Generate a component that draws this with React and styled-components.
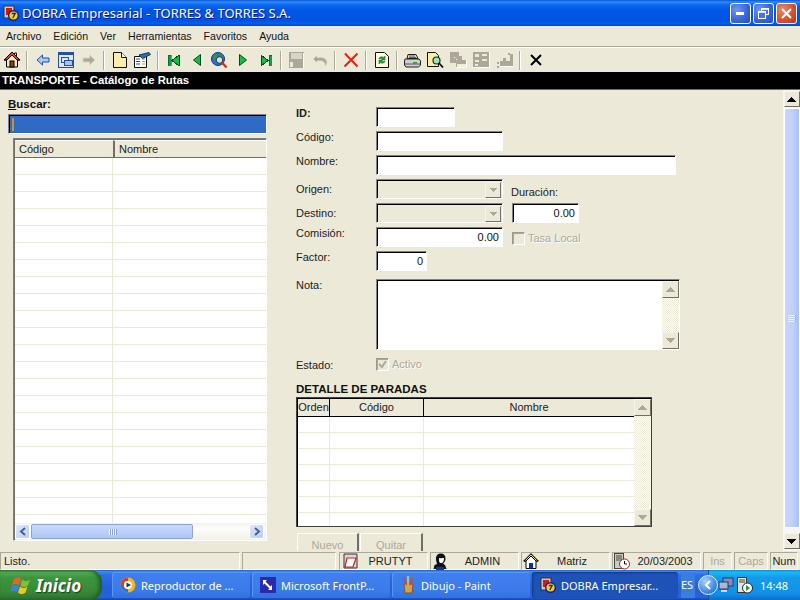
import React from 'react'
import styled, { createGlobalStyle } from 'styled-components'

const UI_FONT = `"Liberation Sans", Arial, sans-serif`

const GlobalStyle = createGlobalStyle`
  html, body { margin: 0; padding: 0; background: #ece9d8; }
  * { box-sizing: border-box; }
`

const Desktop = styled.div`
  width: 800px;
  height: 600px;
  overflow: hidden;
  display: flex;
  flex-direction: column;
  background: #ece9d8;
  font: 11px ${UI_FONT};
  color: #000;
`

/* Title bar */
const TitleBar = styled.div`
  height: 26px;
  flex: none;
  display: flex;
  align-items: center;
  padding: 0 3px 0 3px;
  background: linear-gradient(180deg, #0a56d0 0%, #2f8cff 8%, #0f6cf0 16%, #0056e6 40%, #0054e3 80%, #0060f0 90%, #0047c4 100%);
`
const TitleIcon = styled.span`
  display: flex;
  margin-right: 3px;
`
const TitleText = styled.div`
  flex: 1;
  color: #fff;
  font: 13px "Noto Sans", sans-serif;
  text-shadow: 1px 1px 0 #0f1089;
  white-space: nowrap;
`
const WinButton = styled.div`
  width: 21px;
  height: 21px;
  margin-left: 2px;
  display: flex;
  align-items: center;
  justify-content: center;
  border: 1px solid #fff;
  border-radius: 3px;
  background: ${p => p.$close
    ? 'radial-gradient(circle at 30% 30%, #e98a6c, #d9512f 55%, #b8341a)'
    : 'radial-gradient(circle at 30% 30%, #6f97ee, #3a66db 55%, #2748c0)'};
`

/* Menu */
const MenuBar = styled.div`
  height: 19px;
  flex: none;
  display: flex;
  align-items: center;
  gap: 12px;
  padding: 0 6px;
  margin-bottom: 1px;
  font-size: 10.6px;
`
const MenuItem = styled.span`
  color: #111;
`
const Rule = styled.div`
  height: 2px;
  flex: none;
  background: #fff;
  border-top: 1px solid #aca899;
`

/* Toolbar */
const Toolbar = styled.div`
  height: 24px;
  flex: none;
  display: flex;
  align-items: center;
`
const ToolButton = styled.div`
  width: 23px;
  height: 23px;
  display: flex;
  align-items: center;
  justify-content: center;
`
const ToolSep = styled.div`
  width: 8px;
  height: 19px;
  position: relative;
  &::after {
    content: '';
    position: absolute;
    left: 3px;
    top: 0;
    bottom: 0;
    width: 1px;
    background: #aca899;
    box-shadow: 1px 0 0 #fff;
  }
`
const Banner = styled.div`
  height: 17px;
  flex: none;
  background: #000;
  color: #fff;
  font: bold 11.3px/17px ${UI_FONT};
  padding-left: 2px;
`

/* Body */
const Main = styled.div`
  height: 462px;
  flex: none;
  display: flex;
  overflow: hidden;
  border-top: 1px solid #716f64;
`
const LeftPane = styled.div`
  width: 268px;
  flex: none;
  display: flex;
  flex-direction: column;
  padding: 8px 1px 10px 8px;
`
const SearchLabel = styled.div`
  font: bold 11.5px/13px ${UI_FONT};
  height: 16px;
  color: #111;
  u { text-decoration: underline; }
`
const SearchBox = styled.div`
  height: 20px;
  flex: none;
  background: #316ac5;
  border: 1px solid;
  border-color: #808080 #fff #fff #808080;
  box-shadow: inset 1px 1px 0 #000;
  padding: 3px 0 0 3px;
  &::after {
    content: '';
    display: block;
    width: 2px;
    height: 13px;
    background: #ce9231;
  }
`
const GridFrame = styled.div`
  flex: 1;
  margin: 4px 0 0 5px;
  display: flex;
  flex-direction: column;
  min-height: 0;
  border: 1px solid;
  border-color: #808080 #fff #fff #808080;
  box-shadow: inset 1px 1px 0 #716f64;
  padding: 1px 0 0 1px;
`
const GridHead = styled.div`
  height: 18px;
  flex: none;
  display: grid;
  grid-template-columns: 98px 1fr;
  background: #ece9d8;
  border-bottom: 1px solid #716f64;
`
const GridHeadCell = styled.div`
  line-height: 17px;
  padding-left: 4px;
  color: #222;
  border-top: 1px solid #fff;
  & + & { border-left: 2px solid #716f64; }
`
const GridBody = styled.div`
  flex: 1;
  min-height: 0;
  overflow: hidden;
  background: #fff;
`
const GridRow = styled.div`
  height: 17px;
  display: grid;
  grid-template-columns: 98px 1fr;
  border-bottom: 1px solid #ece9d8;
`
const GridCell = styled.div`
  border-right: 1px solid #ece9d8;
`

const HScroll = styled.div`
  height: 17px;
  flex: none;
  display: flex;
  align-items: center;
  padding: 0 2px 0 0;
  background: linear-gradient(180deg, #f3f1ec, #fdfdfb 30%, #f2f0e6);
`
const LunaArrow = styled.div`
  width: 15px;
  height: 15px;
  flex: none;
  display: flex;
  align-items: center;
  justify-content: center;
  border: 1px solid #fff;
  border-radius: 2px;
  background: linear-gradient(135deg, #dbe7fe, #b9cdf8);
`
const HThumb = styled.div`
  width: 162px;
  height: 15px;
  margin-left: 1px;
  display: flex;
  align-items: center;
  justify-content: center;
  gap: 1px;
  border: 1px solid #fff;
  outline: 1px solid #8ea5d4;
  outline-offset: -1px;
  border-radius: 2px;
  background: linear-gradient(180deg, #c9d8fb, #bbcff9 60%, #aec4f5);
`
const Grip = styled.i`
  display: block;
  background: #eef3fe;
  box-shadow: 1px 0 0 #8ea5d4;
  width: ${p => (p.$flat ? '7px' : '1px')};
  height: ${p => (p.$flat ? '1px' : '6px')};
`
const Spacer = styled.div`
  flex: 1;
`

/* Form */
const FormPane = styled.div`
  flex: 1;
  display: flex;
  flex-direction: column;
  padding: 17px 0 0 28px;
  min-width: 0;
`
const FormRow = styled.div`
  height: ${p => p.$height || 24}px;
  flex: none;
  display: flex;
  align-items: flex-start;
`
const FieldLabel = styled.label`
  width: 80px;
  flex: none;
  line-height: 13px;
  margin-top: ${p => p.$drop || 0}px;
  font-weight: ${p => (p.$bold ? 'bold' : 'normal')};
  color: #1c1c1c;
`
const SideLabel = styled.label`
  margin: 7px 0 0 8px;
  line-height: 13px;
  color: #1c1c1c;
`
const Sunken = styled.div`
  border: 1px solid;
  border-color: #808080 #fff #fff #808080;
  box-shadow: inset 1px 1px 0 #000;
`
const TextBox = styled(Sunken)`
  width: ${p => p.$w}px;
  height: 20px;
  margin-left: ${p => p.$ml || 0}px;
  background: #fff;
  text-align: right;
  padding: 3px 3px 0 0;
  line-height: 13px;
  color: #111;
`
const Combo = styled(Sunken)`
  width: 127px;
  height: 20px;
  background: #ece9d8;
  display: flex;
  justify-content: flex-end;
  padding: 2px 1px 0 0;
`
const ClassicButton = styled.div`
  width: ${p => p.$w || 16}px;
  height: ${p => p.$h || 16}px;
  flex: none;
  display: flex;
  align-items: center;
  justify-content: center;
  background: #ece9d8;
  border: 1px solid;
  border-color: #f6f4ec #716f64 #716f64 #f6f4ec;
`
const CheckField = styled.div`
  display: flex;
  align-items: center;
  gap: 3px;
  margin-left: ${p => p.$ml || 0}px;
  margin-top: ${p => p.$mt || 0}px;
  color: #aca899;
  text-shadow: 1px 1px 0 #fff;
  line-height: 13px;
`
const CheckBox = styled.div`
  width: 13px;
  height: 13px;
  display: flex;
  align-items: center;
  justify-content: center;
  border: 1px solid;
  border-color: #9d9a8a #fff #fff #9d9a8a;
  box-shadow: inset 1px 1px 0 #aca899;
  background: #ece9d8;
`
const NoteBox = styled(Sunken)`
  width: 304px;
  height: 71px;
  background: #fff;
  display: flex;
  justify-content: flex-end;
  padding: 1px 0 0 0;
`
const VBar = styled.div`
  width: 17px;
  flex: none;
  display: flex;
  flex-direction: column;
  justify-content: space-between;
  background-color: #fff;
  background-image: repeating-conic-gradient(#ece9d8 0 25%, #fff 0 50%);
  background-size: 2px 2px;
`
const SectionTitle = styled.div`
  font: bold 11.5px/13px ${UI_FONT};
  margin-top: 11px;
  height: 13px;
  color: #111;
`
const DetailTable = styled.div`
  width: 356px;
  height: 130px;
  flex: none;
  display: flex;
  overflow: hidden;
  border: 1px solid #404040;
  box-shadow: inset 1px 1px 0 #000;
  padding: 1px 0 0 1px;
  margin-top: 1px;
`
const DetailCols = styled.div`
  flex: 1;
  display: flex;
  flex-direction: column;
  background: #fff;
`
const DetailHead = styled.div`
  height: 18px;
  flex: none;
  display: grid;
  grid-template-columns: 32px 94px 1fr;
  background: #ece9d8;
  border-bottom: 1px solid #000;
`
const DetailHeadCell = styled.div`
  text-align: center;
  line-height: 17px;
  color: #222;
  border-right: 1px solid #000;
  &:last-child { border-right: 0; }
`
const DetailRow = styled.div`
  height: 16px;
  flex: none;
  display: grid;
  grid-template-columns: 32px 94px 1fr;
  border-bottom: 1px solid #ece9d8;
`
const ButtonRow = styled.div`
  display: flex;
  gap: 1px;
  margin: 6px 0 0 1px;
`
const FlatButton = styled.div`
  width: ${p => p.$w}px;
  height: 24px;
  text-align: center;
  padding-top: 5px;
  line-height: 13px;
  color: #aca899;
  border-top: 1px solid #fff;
  border-left: 1px solid #fff;
  border-right: 2px solid #716f64;
`

/* Main scrollbar */
const MainScroll = styled.div`
  width: 17px;
  flex: none;
  display: flex;
  flex-direction: column;
  align-items: center;
  padding: 1px 0 2px 0;
  background: #f7f6f0;
`
const MainThumb = styled.div`
  width: 16px;
  height: 420px;
  flex: none;
  margin: 1px 0 0 0;
  display: flex;
  flex-direction: column;
  align-items: center;
  justify-content: center;
  gap: 1px;
  border: 1px solid #fff;
  border-radius: 2px;
  background: linear-gradient(90deg, #c7d7fb, #bdd0fa 60%, #a9c0f3);
`

/* Status bar */
const StatusBar = styled.div`
  height: 19px;
  flex: none;
  display: flex;
  gap: 2px;
  padding: 1px 2px 0 0;
`
const Panel = styled.div`
  width: ${p => p.$w}px;
  height: 18px;
  flex: none;
  display: flex;
  align-items: center;
  border: 1px solid;
  border-color: #aca899 #fff #fff #aca899;
  padding-left: ${p => p.$pad ?? 3}px;
  padding-right: ${p => p.$padEnd || 0}px;
  line-height: 13px;
  color: ${p => (p.$dim ? '#aca899' : '#222')};
  justify-content: ${p => (p.$center ? 'center' : 'flex-start')};
  margin-left: ${p => p.$ml || 0}px;
`
const PanelText = styled.span`
  flex: 1;
  text-align: center;
`

/* Taskbar */
const Taskbar = styled.div`
  height: 30px;
  flex: none;
  display: flex;
  align-items: stretch;
  background: linear-gradient(180deg, #1f5fd8 0, #3f8cf3 6%, #2a6fe6 16%, #245edb 60%, #2663de 90%, #1941a5 100%);
`
const StartButton = styled.div`
  width: 102px;
  flex: none;
  display: flex;
  align-items: center;
  gap: 3px;
  padding-left: 11px;
  border-radius: 0 12px 12px 0;
  background: linear-gradient(180deg, #3c8a3e 0, #56ad58 8%, #3d953e 25%, #378a38 70%, #2e762f 100%);
  box-shadow: inset -3px 0 4px #1f5a20;
  color: #fff;
  font: italic bold 17px "Noto Sans", sans-serif;
  text-shadow: 1px 1px 1px #1a3f1a;
`
const TaskGroup = styled.div`
  flex: none;
  display: flex;
  gap: 2px;
  margin: 2px 0 0 10px;
`
const TaskButton = styled.div`
  width: ${p => p.$w || 138}px;
  height: 26px;
  display: flex;
  align-items: center;
  gap: 5px;
  padding-left: 8px;
  border-radius: 3px;
  color: #fff;
  font: 11px "Noto Sans", sans-serif;
  white-space: nowrap;
  background: ${p => (p.$active ? '#1e52b7' : 'linear-gradient(180deg, #3f80ee, #3b7bea 70%, #3370e0)')};
  box-shadow: ${p => (p.$active ? 'inset 1px 1px 2px #12377f' : 'inset 1px 1px 0 #5c96f3')};
`
const Lang = styled.div`
  width: 14px;
  margin: 4px 0 2px 3px;
  padding-top: 3px;
  background: #3b7cdf;
  color: #fff;
  font: 11px "Noto Sans", sans-serif;
  overflow: visible;
`
const Tray = styled.div`
  flex: 1;
  margin-left: 13px;
  display: flex;
  align-items: center;
  position: relative;
  padding-left: 9px;
  gap: 3px;
  color: #fff;
  font: 11px "Noto Sans", sans-serif;
  background: linear-gradient(180deg, #0f8ee6 0, #19b9f3 8%, #139be8 25%, #1290e8 80%, #0d6cc8 100%);
  border-left: 1px solid #0b4fa8;
`
const TrayChevron = styled.div`
  position: absolute;
  left: -11px;
  top: 5px;
  width: 20px;
  height: 20px;
  border-radius: 50%;
  display: flex;
  align-items: center;
  justify-content: center;
  background: radial-gradient(circle at 35% 30%, #a8d2fb, #2f7fe6 70%);
  border: 1px solid #dfeeff;
`
const Clock = styled.span`
  margin-left: 4px;
`

/* Icons drawn by hand */
const Svg = ({ size = 16, w, h, children, crisp }) => (
  <svg width={w || size} height={h || size} viewBox={`0 0 ${w || size} ${h || size}`} shapeRendering={crisp ? 'crispEdges' : undefined}>
    {children}
  </svg>
)

const AppIcon = ({ size = 16 }) => (
  <svg width={size} height={size} viewBox="0 0 16 16">
    <rect x="1" y="1" width="10" height="12" fill="#c9c9c9" stroke="#333" />
    <path d="M3 3h6v7H3z" fill="#d01818" />
    <circle cx="10.5" cy="10.5" r="4.8" fill="#f5d40f" stroke="#1a1a9a" strokeWidth="1.4" />
    <path d="M8.8 8.5h3.4l-2.4 4.5" fill="none" stroke="#1a1a9a" strokeWidth="1.3" />
  </svg>
)
const HomeIcon = () => (
  <Svg w={18} h={18}>
    <path d="M9 1 1 9h2.500v7h11V9H17L13.500 5.500V2h-2v1.500z" fill="#f7e9b0" stroke="#000" />
    <path d="M9 1 1 9h3l5-5 5 5h3z" fill="#e63a24" stroke="#000" />
    <rect x="7" y="10" width="4" height="6" fill="#7a4a18" stroke="#000" />
  </Svg>
)
const BackIcon = () => (
  <Svg w={14} h={12}>
    <path d="M1 6 6.500 1v3H13v4H6.500v3z" fill="#a9c9f7" stroke="#1b4fb0" />
  </Svg>
)
const ForwardIcon = () => (
  <Svg w={14} h={12}>
    <path d="M13 6 7.500 1v3H1v4h6.500v3z" fill="#aca899" stroke="#d6d3c3" />
  </Svg>
)
const WindowIcon = () => (
  <Svg crisp w={16} h={16}>
    <rect x="0" y="0" width="16" height="16" fill="#244fa6" />
    <rect x="1" y="3" width="14" height="12" fill="#dfe7f5" />
    <rect x="3" y="5" width="7" height="5" fill="#dfe7f5" stroke="#244fa6" />
    <rect x="6" y="8" width="8" height="5" fill="#a9c5ee" stroke="#244fa6" />
  </Svg>
)
const DocIcon = () => (
  <Svg w={14} h={16}>
    <path d="M.5.500h8l5 5v10H.500z" fill="#faeeaa" stroke="#111" />
    <path d="M8.500.500v5h5" fill="#fff" stroke="#111" />
  </Svg>
)
const PropsIcon = () => (
  <Svg w={17} h={16}>
    <path d="M.5 4.500h12v11H.500z" fill="#fff" stroke="#111" />
    <path d="M2 7h4M2 9.500h4M2 12h4" stroke="#2a4a8a" />
    <path d="M8 7h3M8 9.500h3M8 12h3" stroke="#c7a03a" />
    <path d="M5 3 15 .500l1.500 2-8 4z" fill="#2c6fb5" stroke="#12345f" />
  </Svg>
)
const FirstIcon = () => (
  <Svg crisp w={12} h={11}>
    <rect x="0" y="0" width="3" height="11" fill="#0ea33a" stroke="#034" strokeWidth=".5" />
    <path d="M11 0v11L4 5.500z" fill="#10c040" stroke="#034a1a" />
  </Svg>
)
const PrevIcon = () => (
  <Svg w={8} h={12}>
    <path d="M7.500.500v11L.5 6z" fill="#10c040" stroke="#034a1a" />
  </Svg>
)
const NextIcon = () => (
  <Svg w={8} h={12}>
    <path d="M.5.500v11L7.500 6z" fill="#10c040" stroke="#034a1a" />
  </Svg>
)
const LastIcon = () => (
  <Svg crisp w={12} h={11}>
    <path d="M1 0v11l7-5.500z" fill="#10c040" stroke="#034a1a" />
    <rect x="9" y="0" width="3" height="11" fill="#0ea33a" stroke="#034" strokeWidth=".5" />
  </Svg>
)
const GlobeIcon = () => (
  <Svg w={17} h={17}>
    <circle cx="7" cy="7" r="6.500" fill="#2f6fc9" stroke="#123a7a" />
    <path d="M3 3c3-2 4 0 3 2S3 6 2 8zM9 2c3 1 4 4 3 6-2 0-2-2-3-3z" fill="#2f9a3a" />
    <circle cx="8.500" cy="8" r="3.300" fill="#bfe8f5" stroke="#334" />
    <path d="m11 10.500 4.500 5" stroke="#c8331f" strokeWidth="2.400" />
  </Svg>
)
const SaveIcon = () => (
  <Svg crisp w={15} h={16}>
    <rect x="0" y="0" width="15" height="16" fill="#aca899" />
    <rect x="2" y="1" width="11" height="6" fill="#d8d5c6" />
    <rect x="1" y="10" width="3" height="5" fill="#ece9d8" />
    <rect x="4" y="10" width="8" height="6" fill="#aca899" />
    <rect x="14" y="1" width="1" height="15" fill="#fff" />
  </Svg>
)
const UndoIcon = () => (
  <Svg w={16} h={13}>
    <path d="M1 5 5 1v2.500c6-1 10 1 10 5 0 1.500-1 3-2.500 3.500 1-3-1-5-4-5H5V9z" fill="#aca899" stroke="#e5e2d3" strokeWidth=".8" />
  </Svg>
)
const RedX = () => (
  <Svg w={16} h={16}>
    <path d="m2 1.500 12.500 13M14.500 1.500 1.500 14.500" stroke="#e8200f" strokeWidth="2" />
  </Svg>
)
const RefreshIcon = () => (
  <Svg w={14} h={16}>
    <path d="M.5.500h9l4 4v11H.500z" fill="#fffbe0" stroke="#111" />
    <path d="M4 7c0-2 3-3 5-1.500L10 4v4H6.500l1-1C6.500 6 5 6.500 4 7zM10 9c0 2-3 3-5 1.500L4 12V8h3.500l-1 1c1 1 2.500.500 3.500 0z" fill="#18a83a" stroke="#0a5a1a" strokeWidth=".5" />
  </Svg>
)
const PrinterIcon = () => (
  <Svg w={17} h={15}>
    <path d="M4 1.500h8l2 4H3z" fill="#f6e46a" stroke="#222" />
    <path d="M5 3h6M5 4.500h7" stroke="#3a5fc0" />
    <path d="M1 6h14l1.500 2v4l-2 2H2l-1.500-2V8z" fill="#cfcfcf" stroke="#222" />
    <rect x="9" y="9" width="4" height="1.500" fill="#1fa83a" />
    <path d="M1 11h15" stroke="#555" />
  </Svg>
)
const PreviewIcon = () => (
  <Svg w={17} h={16}>
    <path d="M.5.500h8l3 3v11H.500z" fill="#faf0a0" stroke="#111" />
    <circle cx="9.500" cy="8.500" r="3.500" fill="#9fe0c8" stroke="#222" strokeWidth="1.200" />
    <path d="m12 11 4 4.500" stroke="#111" strokeWidth="1.800" />
  </Svg>
)
const DisabledPaste = () => (
  <Svg crisp w={17} h={16}>
    <path d="M0 0h9v4h3v4h4v7H6v-4H0z" fill="#aca899" />
    <path d="M7 12h9v3H7z" fill="#ece9d8" />
    <path d="M16 8h1v8H6v-1h10z" fill="#fff" />
    <path d="M8 13h1M10 13h1M12 13h1M14 13h1M4 5h1M6 7h1" stroke="#fff" />
  </Svg>
)
const DisabledGrid = () => (
  <Svg crisp w={17} h={16}>
    <rect x="0" y="0" width="16" height="15" fill="#aca899" />
    <path d="M2 2h4v3H2zM9 2h5v2H9zM9 7h5v2H9zM2 8h4v2H2zM2 12h3v2H2z" fill="#ece9d8" />
    <path d="M16 0h1v16H0v-1h16z" fill="#fff" />
  </Svg>
)
const DisabledWand = () => (
  <Svg crisp w={17} h={16}>
    <path d="M14 2h3v12h-3zM4 9h10v5H4zM7 6h3v3H7z" fill="#aca899" />
    <path d="M12 1h2v2h-2zM1 10h2v2H1zM1 14h2v2H1z" fill="#aca899" />
    <path d="M4 14h13v1H4z" fill="#fff" />
  </Svg>
)
const BlackX = () => (
  <Svg w={12} h={12}>
    <path d="m1 1 10 10M11 1 1 11" stroke="#000" strokeWidth="2" />
  </Svg>
)
const Tri = ({ dir = 'up', color = '#000', w = 9, h = 5 }) => (
  <svg width={w} height={h} viewBox={`0 0 ${w} ${h}`} shapeRendering="crispEdges">
    <path d={dir === 'up' ? `M${w / 2} 0 ${w} ${h}H0z` : `M0 0H${w}L${w / 2} ${h}z`} fill={color} />
  </svg>
)
const Chev = ({ dir }) => (
  <svg width="8" height="9" viewBox="0 0 8 9">
    <path d={dir === 'left' ? 'M6 1 2 4.500 6 8' : 'M2 1 6 4.500 2 8'} fill="none" stroke="#4d6185" strokeWidth="2" />
  </svg>
)
const StartFlag = () => (
  <svg width="22" height="21" viewBox="0 0 22 21">
    <path d="M3 4c3-2 5-2 7 0l-2 6c-2-1.500-4-1.500-7 0z" fill="#e8632b" />
    <path d="M11 4.500c3 2 5 2 8 0l-2 6c-3 2-5 2-7.500 0z" fill="#7fbf3a" />
    <path d="M.7 11c3-1.500 5-1.500 7 0L6 17c-2-1.500-4-1.500-7 0z" fill="#3a82e0" />
    <path d="M9 11.500c2.500 2 4.500 2 7.500 0l-2 6c-3 2-5 2-7.500 0z" fill="#f3c421" />
  </svg>
)
const MediaIcon = () => (
  <Svg w={16} h={16}>
    <circle cx="8" cy="8" r="7.500" fill="#f2b71f" />
    <path d="M8 .5A7.500 7.500 0 0 0 .5 8H4a4 4 0 0 1 4-4z" fill="#d8402a" />
    <path d="M.5 8A7.500 7.500 0 0 0 8 15.500V12a4 4 0 0 1-4-4z" fill="#2f74d0" />
    <circle cx="8" cy="8" r="4" fill="#fff" />
    <path d="M6.500 5.500v5L11 8z" fill="#333" />
  </Svg>
)
const FrontPageIcon = () => (
  <Svg w={16} h={16}>
    <rect width="16" height="16" fill="#2a2ab0" />
    <path d="M3 3h4L5.500 4.500l5 5L12 8v5H8l1.500-1.500-5-5L3 8z" fill="#fff" />
  </Svg>
)
const PaintIcon = () => (
  <Svg w={16} h={18}>
    <path d="M4 8h9l-1 9H5z" fill="#d8a24a" stroke="#7a5a2a" />
    <path d="M3 1l4 8M13 2l-3 7" stroke="#d8402a" strokeWidth="1.500" />
    <path d="M8 0v9" stroke="#f2d23a" strokeWidth="1.500" />
  </Svg>
)
const NoteMark = () => (
  <Svg w={18} h={18}>
    <path d="M2 2h13v14H2z" fill="#d8d8d8" stroke="#333" />
    <path d="M5 6h9l-3 9H3z" fill="#fff" stroke="#e01818" strokeWidth="1.200" />
  </Svg>
)
const UserIcon = () => (
  <Svg w={14} h={17}>
    <path d="M3 6c0-4 2-5.500 5-5.500s4.500 2 4.500 5c0 2-1 4-2.500 5l2 1.500 1.500 4H.500l1-4L4 11C3.500 9 3 8 3 6z" fill="#111" />
    <path d="M6 5c2 .500 4 0 5 0 0 3-1 5-3 5S6 8 6 5z" fill="#fff" />
    <path d="M3 14h8v3H3z" fill="#1c2fa0" />
  </Svg>
)
const SmallHome = () => (
  <Svg w={16} h={16}>
    <path d="M8 .800.800 8H3v7.500h10V8h2.200z" fill="#fff" stroke="#000" />
    <path d="M8 .800.800 8H3l5-5 5 5h2.200z" fill="#f5e020" stroke="#000" />
    <rect x="6" y="10" width="4" height="5.500" fill="#0a2ad0" />
  </Svg>
)
const ServerClock = () => (
  <Svg w={16} h={17}>
    <rect x=".5" y=".5" width="9" height="15" fill="#cfcbbc" stroke="#444" />
    <path d="M2 3h6M2 5h6M2 7h6" stroke="#444" />
    <circle cx="10.500" cy="11" r="5" fill="#fff" stroke="#b02015" />
    <path d="M10.500 8v3h2.500" stroke="#111" fill="none" />
  </Svg>
)
const TrayNet = () => (
  <Svg w={16} h={16}>
    <rect x="5" y="1" width="10" height="8" fill="#7d90b8" stroke="#2a3a6a" />
    <rect x="1" y="5" width="9" height="7" fill="#aab6d4" stroke="#2a3a6a" />
    <path d="M3 13h6v2H3z" fill="#d0d6e4" />
  </Svg>
)
const TrayServer = () => (
  <Svg w={16} h={17}>
    <rect x=".5" y=".5" width="9" height="15" fill="#e6e2d4" stroke="#333" />
    <path d="M2 3h6M2 5h6" stroke="#444" />
    <circle cx="10.500" cy="11" r="5" fill="#fff" stroke="#222" />
    <path d="M9 8v6l4-3z" fill="#1a9a3a" />
  </Svg>
)

const GRID_ROWS = Array.from({ length: 22 }, (_, i) => i)
const DETAIL_ROWS = Array.from({ length: 7 }, (_, i) => i)

const TOOLS = [
  <HomeIcon />, null, <BackIcon />, <WindowIcon />, <ForwardIcon />, null,
  <DocIcon />, <PropsIcon />, null, <FirstIcon />, <PrevIcon />, <GlobeIcon />,
  <NextIcon />, <LastIcon />, null, <SaveIcon />, <UndoIcon />, null, <RedX />,
  null, <RefreshIcon />, null, <PrinterIcon />, <PreviewIcon />, <DisabledPaste />,
  <DisabledGrid />, <DisabledWand />, null, <BlackX />,
]

const ComboArrow = () => (
  <ClassicButton>
    <Tri dir="down" color="#aca899" w={7} h={4} />
  </ClassicButton>
)

const App = () => (
  <Desktop>
    <GlobalStyle />
    <TitleBar>
      <TitleIcon><AppIcon /></TitleIcon>
      <TitleText>DOBRA Empresarial - TORRES &amp; TORRES S.A.</TitleText>
      <WinButton>
        <svg width="9" height="3"><rect width="8" height="3" fill="#fff" /></svg>
      </WinButton>
      <WinButton>
        <svg width="13" height="13" viewBox="0 0 13 13" fill="none" stroke="#fff">
          <rect x="4.500" y="1.500" width="7" height="6" />
          <rect x="1.500" y="4.500" width="7" height="7" fill="#4a72e0" />
          <path d="M1 5h8M4 2h8" strokeWidth="1.500" />
        </svg>
      </WinButton>
      <WinButton $close>
        <svg width="13" height="13" viewBox="0 0 13 13">
          <path d="m2 2 9 9M11 2l-9 9" stroke="#fff" strokeWidth="2" />
        </svg>
      </WinButton>
    </TitleBar>

    <MenuBar>
      {['Archivo', 'Edición', 'Ver', 'Herramientas', 'Favoritos', 'Ayuda'].map(m => (
        <MenuItem key={m}>{m}</MenuItem>
      ))}
    </MenuBar>
    <Rule />

    <Toolbar>
      {TOOLS.map((icon, i) => (icon ? <ToolButton key={i}>{icon}</ToolButton> : <ToolSep key={i} />))}
    </Toolbar>

    <Banner>TRANSPORTE - Catálogo de Rutas</Banner>

    <Main>
      <LeftPane>
        <SearchLabel><u>B</u>uscar:</SearchLabel>
        <SearchBox />
        <GridFrame>
          <GridHead>
            <GridHeadCell>Código</GridHeadCell>
            <GridHeadCell>Nombre</GridHeadCell>
          </GridHead>
          <GridBody>
            {GRID_ROWS.map(r => (
              <GridRow key={r}><GridCell /><div /></GridRow>
            ))}
          </GridBody>
          <HScroll>
            <LunaArrow><Chev dir="left" /></LunaArrow>
            <HThumb>
              {[0, 1, 2, 3].map(i => <Grip key={i} />)}
            </HThumb>
            <Spacer />
            <LunaArrow><Chev dir="right" /></LunaArrow>
          </HScroll>
        </GridFrame>
      </LeftPane>

      <FormPane>
        <FormRow>
          <FieldLabel $bold>ID:</FieldLabel>
          <TextBox $w={79} />
        </FormRow>
        <FormRow>
          <FieldLabel>Código:</FieldLabel>
          <TextBox $w={127} />
        </FormRow>
        <FormRow>
          <FieldLabel>Nombre:</FieldLabel>
          <TextBox $w={300} />
        </FormRow>
        <FormRow>
          <FieldLabel $drop={4}>Origen:</FieldLabel>
          <Combo><ComboArrow /></Combo>
          <SideLabel>Duración:</SideLabel>
        </FormRow>
        <FormRow>
          <FieldLabel $drop={4}>Destino:</FieldLabel>
          <Combo><ComboArrow /></Combo>
          <TextBox $w={67} $ml={9}>0.00</TextBox>
        </FormRow>
        <FormRow>
          <FieldLabel>Comisión:</FieldLabel>
          <TextBox $w={127}>0.00</TextBox>
          <CheckField $ml={9} $mt={5}>
            <CheckBox />
            Tasa Local
          </CheckField>
        </FormRow>
        <FormRow $height={28}>
          <FieldLabel>Factor:</FieldLabel>
          <TextBox $w={51}>0</TextBox>
        </FormRow>
        <FormRow $height={79}>
          <FieldLabel>Nota:</FieldLabel>
          <NoteBox>
            <VBar>
              <ClassicButton $w={17} $h={17}><Tri color="#aca899" /></ClassicButton>
              <ClassicButton $w={17} $h={17}><Tri dir="down" color="#aca899" /></ClassicButton>
            </VBar>
          </NoteBox>
        </FormRow>
        <FormRow $height={14}>
          <FieldLabel $drop={1}>Estado:</FieldLabel>
          <CheckField>
            <CheckBox>
              <svg width="9" height="9" viewBox="0 0 9 9">
                <path d="m1 4 3 3 4-6" fill="none" stroke="#aca899" strokeWidth="2" />
              </svg>
            </CheckBox>
            Activo
          </CheckField>
        </FormRow>
        <SectionTitle>DETALLE DE PARADAS</SectionTitle>
        <DetailTable>
          <DetailCols>
            <DetailHead>
              <DetailHeadCell>Orden</DetailHeadCell>
              <DetailHeadCell>Código</DetailHeadCell>
              <DetailHeadCell>Nombre</DetailHeadCell>
            </DetailHead>
            {DETAIL_ROWS.map(r => (
              <DetailRow key={r}><GridCell /><GridCell /><div /></DetailRow>
            ))}
          </DetailCols>
          <VBar>
            <ClassicButton $w={17} $h={17}><Tri color="#aca899" /></ClassicButton>
            <ClassicButton $w={17} $h={17}><Tri dir="down" color="#aca899" /></ClassicButton>
          </VBar>
        </DetailTable>
        <ButtonRow>
          <FlatButton $w={62}>Nuevo</FlatButton>
          <FlatButton $w={63}>Quitar</FlatButton>
        </ButtonRow>
      </FormPane>

      <MainScroll>
        <ClassicButton $w={16} $h={16}><Tri /></ClassicButton>
        <MainThumb>
          {[0, 1, 2, 3].map(i => <Grip key={i} $flat />)}
        </MainThumb>
        <Spacer />
        <ClassicButton $w={16} $h={16}><Tri dir="down" /></ClassicButton>
      </MainScroll>
    </Main>

    <StatusBar>
      <Panel $w={240}>Listo.</Panel>
      <Panel $w={94} />
      <Panel $w={89} $pad={2} $padEnd={6} $ml={1}><NoteMark /><PanelText>PRUTYT</PanelText></Panel>
      <Panel $w={89} $pad={2}><UserIcon /><PanelText>ADMIN</PanelText></Panel>
      <Panel $w={89} $pad={1} $padEnd={4}><SmallHome /><PanelText>Matriz</PanelText></Panel>
      <Panel $w={89} $pad={1}><ServerClock /><PanelText>20/03/2003</PanelText></Panel>
      <Panel $w={29} $pad={0} $center $dim>Ins</Panel>
      <Panel $w={34} $pad={0} $center $dim>Caps</Panel>
      <Panel $w={28} $pad={0} $center>Num</Panel>
    </StatusBar>

    <Taskbar>
      <StartButton><StartFlag />Inicio</StartButton>
      <TaskGroup>
        <TaskButton><MediaIcon />Reproductor de ...</TaskButton>
        <TaskButton><FrontPageIcon />Microsoft FrontP...</TaskButton>
        <TaskButton><PaintIcon />Dibujo - Paint</TaskButton>
        <TaskButton $w={146} $active><AppIcon />DOBRA Empresar...</TaskButton>
      </TaskGroup>
      <Lang>ES</Lang>
      <Tray>
        <TrayChevron>
          <svg width="9" height="10" viewBox="0 0 9 10">
            <path d="M6 1 2 5l4 4" fill="none" stroke="#fff" strokeWidth="2" />
          </svg>
        </TrayChevron>
        <TrayNet />
        <TrayServer />
        <Clock>14:48</Clock>
      </Tray>
    </Taskbar>
  </Desktop>
)

export default App
